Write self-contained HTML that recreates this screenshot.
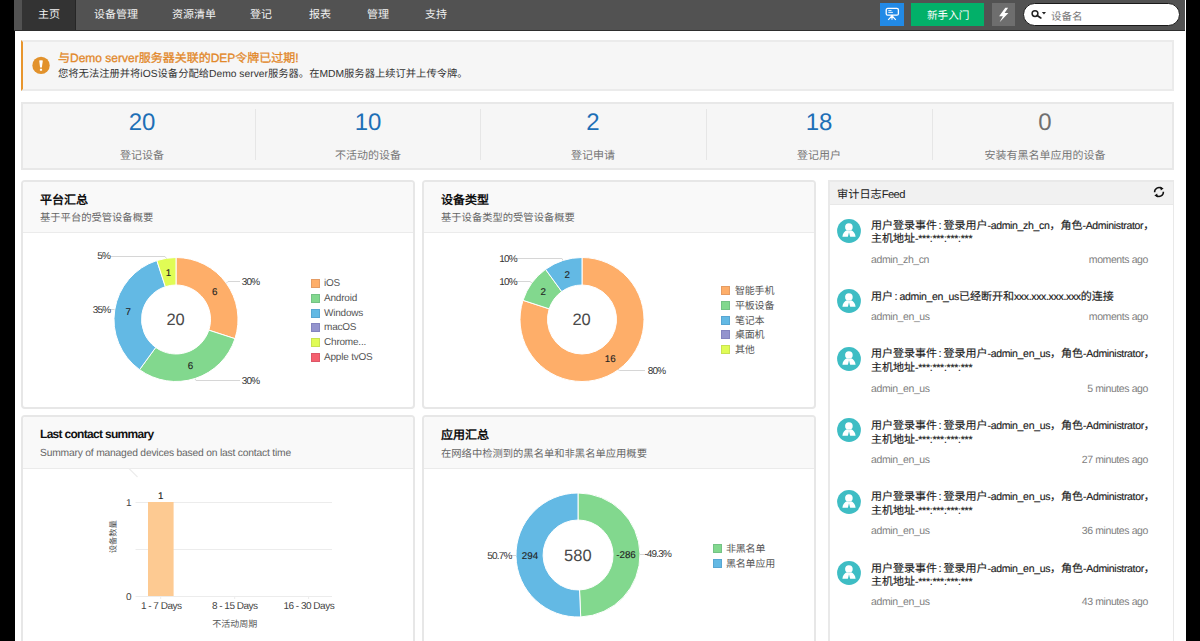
<!DOCTYPE html>
<html lang="zh-CN"><head><meta charset="utf-8">
<style>
*{box-sizing:border-box;margin:0;padding:0}
html,body{width:1200px;height:641px;overflow:hidden;background:#fff;font-family:"Liberation Sans",sans-serif;color:#333;text-rendering:geometricPrecision;line-height:1.15}
.a{position:absolute}
#lb{left:0;top:0;width:14.5px;height:641px;background:#000}
#rb{left:1185.7px;top:0;width:15px;height:641px;background:#000}
#nav{left:14px;top:0;width:1171px;height:31px;background:#525252;border-bottom:1px solid #2e2e2e}
#act{left:22px;top:0;width:54px;height:30px;background:#333;border-right:1px solid #262626}
.nt{top:9px;font-size:11px;color:#f2f2f2;white-space:nowrap}
.card{border:2px solid #e7e7e7;border-radius:4px;background:#fff;overflow:hidden}
.ch{position:absolute;left:0;top:0;right:0;height:51px;background:#f9f9f9;border-bottom:1px solid #ebebeb}
.ct{position:absolute;left:17px;top:11.6px;font-size:12px;font-weight:bold;color:#111;white-space:nowrap}
.cs{position:absolute;left:17px;top:31px;font-size:10.3px;color:#666;white-space:nowrap}
.stn{font-size:24px;color:#1d6fb6;text-align:center;width:226px}
.stl{font-size:11px;color:#777;text-align:center;width:226px}
.dv{width:1px;height:51px;top:109px;background:#e6e6e6}
.lg{font-size:10px;color:#555;white-space:nowrap;letter-spacing:-0.2px}
.sq{width:9px;height:9px;box-shadow:inset 0 0 0 1px rgba(0,0,60,0.1)}
.fi{font-size:11px;color:#222;white-space:nowrap;line-height:13.5px;-webkit-text-stroke:0.15px #222}
.l{letter-spacing:-0.33px;font-size:10.5px}
.cl{display:inline-block;width:6.5px;padding-left:1.5px;font-size:11px}
.fm{font-size:10.5px;color:#808080;white-space:nowrap;letter-spacing:-0.4px}
.av{width:24px;height:24px;border-radius:50%;background:#3ebdc4}
</style></head><body>
<div class="a" id="lb"></div>
<div class="a" id="rb"></div>
<div class="a" id="nav"></div>
<div class="a" id="act"></div>
<div class="a nt" style="left:38px">主页</div>
<div class="a nt" style="left:94px">设备管理</div>
<div class="a nt" style="left:172px">资源清单</div>
<div class="a nt" style="left:250px">登记</div>
<div class="a nt" style="left:309px">报表</div>
<div class="a nt" style="left:367px">管理</div>
<div class="a nt" style="left:425px">支持</div>

<!-- nav right -->
<div class="a" style="left:880px;top:3px;width:24px;height:22.5px;background:#228ae6"></div>
<div class="a" style="left:911px;top:3px;width:73px;height:23px;background:#02b069"></div>
<div class="a nt" style="left:927px;top:9.8px;color:#fff;font-size:10.6px">新手入门</div>
<div class="a" style="left:992px;top:3px;width:23px;height:23px;background:#6e6e6e"></div>
<div class="a" style="left:1023px;top:2.5px;width:156.5px;height:23px;background:#fff;border:1.2px solid #1a1a1a;border-radius:12px"></div>
<div class="a" style="left:1051px;top:10.5px;font-size:10.5px;color:#777">设备名</div>

<svg class="a" style="left:0;top:0" width="1200" height="31" viewBox="0 0 1200 31">
<rect x="886.2" y="8.4" width="12.2" height="6.8" rx="1.5" fill="none" stroke="#fff" stroke-width="1.3"/>
<path d="M888.3 10.6h3.2M888.3 12.4h4.6" stroke="#fff" stroke-width="0.9"/>
<circle cx="892" cy="16" r="1.2" fill="#fff"/>
<path d="M891.8 16L888.2 19.8M892 16V19.8M892.2 16L895.8 19.8" stroke="#fff" stroke-width="1.1"/>
<path d="M1005.3 7.8H1008.1L1004.6 13.1H1008.4L999.6 22.2L1002.9 16.3H999.1Z" fill="#fff"/>
<circle cx="1035" cy="13.6" r="2.9" fill="none" stroke="#222" stroke-width="1.5"/>
<path d="M1037.2 15.6L1040.8 17.9" stroke="#222" stroke-width="1.8" stroke-linecap="round"/>
<path d="M1041.9 12H1046L1043.95 14.6Z" fill="#222"/>
</svg>
<!-- alert -->
<div class="a" style="left:21px;top:40px;width:1153px;height:51px;background:#f6f6f6;border:2px solid #ebebeb;border-left:2px solid #e8962e"></div>
<svg class="a" style="left:30px;top:54px" width="22" height="22" viewBox="30 54 22 22"><circle cx="41.05" cy="65.4" r="8.7" fill="#e2922c"/><path d="M39.2 60.6Q41 59.9 42.8 60.6L41.9 67.5H40.1Z" fill="#fff"/><rect x="39.9" y="68.7" width="2.2" height="2.1" rx="0.4" fill="#fff"/></svg>
<div class="a" style="left:58px;top:51.6px;font-size:12px;color:#e2882a;-webkit-text-stroke:0.3px #e2882a;white-space:nowrap">与Demo server服务器关联的DEP令牌已过期!</div>
<div class="a" style="left:58px;top:69.3px;font-size:10.3px;color:#333;white-space:nowrap">您将无法注册并将iOS设备分配给Demo server服务器。在MDM服务器上续订并上传令牌。</div>

<!-- stats -->
<div class="a" style="left:21px;top:102px;width:1153px;height:68px;background:#f6f6f6;border:2px solid #e8e8e8"></div>
<div class="a dv" style="left:255px"></div>
<div class="a dv" style="left:480px"></div>
<div class="a dv" style="left:706px"></div>
<div class="a dv" style="left:932px"></div>
<div class="a stn" style="left:29px;top:109px">20</div>
<div class="a stn" style="left:255px;top:109px">10</div>
<div class="a stn" style="left:480px;top:109px">2</div>
<div class="a stn" style="left:706px;top:109px">18</div>
<div class="a stn" style="left:932px;top:109px;color:#707070">0</div>
<div class="a stl" style="left:29px;top:150px">登记设备</div>
<div class="a stl" style="left:255px;top:150px">不活动的设备</div>
<div class="a stl" style="left:480px;top:150px">登记申请</div>
<div class="a stl" style="left:706px;top:150px">登记用户</div>
<div class="a stl" style="left:932px;top:150px">安装有黑名单应用的设备</div>

<!-- cards -->
<div class="a card" style="left:21px;top:180px;width:394px;height:229px"><div class="ch"></div><div class="ct">平台汇总</div><div class="cs">基于平台的受管设备概要</div></div>
<div class="a card" style="left:422px;top:180px;width:394px;height:229px"><div class="ch"></div><div class="ct">设备类型</div><div class="cs">基于设备类型的受管设备概要</div></div>
<div class="a card" style="left:21px;top:415px;width:394px;height:240px"><div class="ch" style="height:52px"></div><div class="ct" style="letter-spacing:-0.7px;top:11px">Last contact summary</div><div class="cs" style="letter-spacing:-0.2px;top:31px">Summary of managed devices based on last contact time</div></div>
<div class="a card" style="left:422px;top:415px;width:394px;height:240px"><div class="ch" style="height:52px"></div><div class="ct" style="top:11.6px">应用汇总</div><div class="cs" style="top:32px">在网络中检测到的黑名单和非黑名单应用概要</div></div>

<!-- feed -->
<div class="a" style="left:828px;top:180px;width:346px;height:470px;border:2px solid #e9e9e9;border-right-width:1.5px;background:#fff"></div>
<div class="a" style="left:830px;top:182px;width:342.5px;height:23px;background:#f1f1f1;border-bottom:1px solid #e8e8e8"></div>
<div class="a" style="left:837px;top:188.8px;font-size:11.2px;color:#222">审计日志<span style="letter-spacing:-0.6px">Feed</span></div>

<svg class="a" style="left:0;top:0" width="1200" height="641" viewBox="0 0 1200 641" font-family="Liberation Sans, sans-serif">
<g stroke="#fff" stroke-width="1">
<path d="M176.00 257.50A62 62 0 0 1 234.97 338.66L208.81 330.16A34.5 34.5 0 0 0 176.00 285.00Z" fill="#feae69"/>
<path d="M234.97 338.66A62 62 0 0 1 139.56 369.66L155.72 347.41A34.5 34.5 0 0 0 208.81 330.16Z" fill="#82d88e"/>
<path d="M139.56 369.66A62 62 0 0 1 156.84 260.53L165.34 286.69A34.5 34.5 0 0 0 155.72 347.41Z" fill="#63b9e4"/>
<path d="M156.84 260.53A62 62 0 0 1 176.00 257.50L176.00 285.00A34.5 34.5 0 0 0 165.34 286.69Z" fill="#e0fc55"/>
<path d="M582.00 257.50A62 62 0 1 1 523.03 300.34L549.19 308.84A34.5 34.5 0 1 0 582.00 285.00Z" fill="#feae69"/>
<path d="M523.03 300.34A62 62 0 0 1 545.56 269.34L561.72 291.59A34.5 34.5 0 0 0 549.19 308.84Z" fill="#82d88e"/>
<path d="M545.56 269.34A62 62 0 0 1 582.00 257.50L582.00 285.00A34.5 34.5 0 0 0 561.72 291.59Z" fill="#63b9e4"/>
<path d="M578.00 493.00A62 62 0 0 1 580.70 616.94L579.53 589.97A35 35 0 0 0 578.00 520.00Z" fill="#82d88e"/>
<path d="M580.70 616.94A62 62 0 1 1 578.00 493.00L578.00 520.00A35 35 0 1 0 579.53 589.97Z" fill="#63b9e4"/>
</g>
<g fill="none" stroke="#d6d6d6" stroke-width="1">
<path d="M110 256.5H165L166.5 258.5"/>
<path d="M226 283.5L228 281.5H240"/>
<path d="M110 309.5H114.5"/>
<path d="M195 379L196 380.5H240"/>
<path d="M516 258.5H562L563 260.5"/>
<path d="M516 281.5H530L532 283"/>
<path d="M618 369.5L619.5 370.5H645"/>
<path d="M511 555.5H516"/>
<path d="M640 554.5H644"/>
</g>
<g font-size="10" fill="#333" letter-spacing="-0.8">
<text x="97.3" y="258.5">5%</text>
<text x="241.8" y="284.5">30%</text>
<text x="92.8" y="312.5">35%</text>
<text x="241.8" y="383.5">30%</text>
<text x="499.3" y="261.5">10%</text>
<text x="499.3" y="284.5">10%</text>
<text x="647.8" y="373.5">80%</text>
<text x="487.3" y="558.5">50.7%</text>
<text x="644.3" y="557.0">-49.3%</text>
</g>
<g font-size="9.8" fill="#222" text-anchor="middle" stroke="#222" stroke-width="0.12">
<text x="214.8" y="295">6</text>
<text x="190.5" y="368.6">6</text>
<text x="128.2" y="314.5">7</text>
<text x="168.5" y="275.5">1</text>
<text x="610.2" y="362">16</text>
<text x="543.2" y="295">2</text>
<text x="567.2" y="277.5">2</text>
<text x="626" y="558">-286</text>
<text x="530" y="559">294</text>
</g>
<g font-size="16.5" fill="#4a4a4a" text-anchor="middle">
<text x="175.6" y="325.2">20</text>
<text x="581.6" y="325.2">20</text>
<text x="577.8" y="561">580</text>
</g>
<path d="M129 468.5L137.5 477" stroke="#ececec" stroke-width="1.2"/>
<!-- bar chart -->
<g stroke="#ececec" stroke-width="1">
<path d="M135.5 502.5H332M135.5 549.5H332M135.5 596.5H332M160.7 596V599M234.7 596V599M308.6 596V599"/>
</g>
<rect x="148" y="502" width="25.6" height="94" fill="#fdca92"/>
<g font-size="10" fill="#444">
<text x="131.5" y="506" text-anchor="end">1</text>
<text x="131.5" y="600" text-anchor="end">0</text>
<text x="160.7" y="498.5" text-anchor="middle" fill="#222" stroke="#222" stroke-width="0.12" font-size="9.8">1</text>
<g letter-spacing="-0.5"><text x="161.2" y="609" text-anchor="middle">1 - 7 Days</text>
<text x="234.7" y="609" text-anchor="middle">8 - 15 Days</text>
<text x="308.8" y="609" text-anchor="middle">16 - 30 Days</text></g>
<text x="234.7" y="627" text-anchor="middle" fill="#555" font-size="9">不活动周期</text>
<text transform="translate(115.8 536.7) rotate(-90)" text-anchor="middle" fill="#555" font-size="8.3">设备数量</text>
</g>
</svg>

<!-- legends -->
<div class="a sq" style="left:311px;top:279px;background:#feae69"></div><div class="a lg" style="left:324px;top:278.0px">iOS</div>
<div class="a sq" style="left:311px;top:293.8px;background:#82d88e"></div><div class="a lg" style="left:324px;top:292.8px">Android</div>
<div class="a sq" style="left:311px;top:308.6px;background:#63b9e4"></div><div class="a lg" style="left:324px;top:307.6px">Windows</div>
<div class="a sq" style="left:311px;top:323.4px;background:#9494ce"></div><div class="a lg" style="left:324px;top:322.4px">macOS</div>
<div class="a sq" style="left:311px;top:338.2px;background:#e0fc55"></div><div class="a lg" style="left:324px;top:337.2px">Chrome...</div>
<div class="a sq" style="left:311px;top:353px;background:#f5606e"></div><div class="a lg" style="left:324px;top:352.0px">Apple tvOS</div>

<div class="a sq" style="left:721px;top:286px;background:#feae69"></div><div class="a lg" style="left:735px;top:286.0px">智能手机</div>
<div class="a sq" style="left:721px;top:300.8px;background:#82d88e"></div><div class="a lg" style="left:735px;top:300.8px">平板设备</div>
<div class="a sq" style="left:721px;top:315.6px;background:#63b9e4"></div><div class="a lg" style="left:735px;top:315.6px">笔记本</div>
<div class="a sq" style="left:721px;top:330.4px;background:#9494ce"></div><div class="a lg" style="left:735px;top:330.4px">桌面机</div>
<div class="a sq" style="left:721px;top:345.2px;background:#e0fc55"></div><div class="a lg" style="left:735px;top:345.2px">其他</div>

<div class="a sq" style="left:713px;top:544px;background:#82d88e"></div><div class="a lg" style="left:726px;top:543.5px">非黑名单</div>
<div class="a sq" style="left:713px;top:559px;background:#63b9e4"></div><div class="a lg" style="left:726px;top:558.5px">黑名单应用</div>
<svg class="a" style="left:1151px;top:184px" width="16" height="16" viewBox="0 0 16 16"><path d="M3.6 8.2A4.4 4.4 0 0 1 10.6 4.4" fill="none" stroke="#111" stroke-width="1.5"/><path d="M12.4 7.8A4.4 4.4 0 0 1 5.4 11.6" fill="none" stroke="#111" stroke-width="1.5"/><path d="M9.2 2.6L12.6 4.6L9.8 6.6Z" fill="#111"/><path d="M6.8 13.4L3.4 11.4L6.2 9.4Z" fill="#111"/></svg>
<!-- feed items -->
<div class="a" style="left:837px;top:218.7px;width:24px;height:24px"><svg width="24" height="24" viewBox="0 0 24 24"><circle cx="12" cy="12" r="11.9" fill="#3ebdc4"/><circle cx="11.9" cy="8" r="3.8" fill="#fff"/><path d="M5.4 17.8C5.7 14.2 7.8 11.9 10 11.3L12 12.2L14 11.3C16.2 11.9 18.3 14.2 18.6 17.8Z" fill="#fff"/><path d="M12 13.2L13.2 17.9H10.8Z" fill="#3ebdc4"/></svg></div>
<div class="a fi" style="left:871px;top:219.9px">用户登录事件<span class="cl">:</span>登录用户<span class="l">-admin_zh_cn</span>，角色<span class="l">-Administrator</span>，<br>主机地址<span class="l" style="letter-spacing:-0.25px">-***:***:***:***</span></div>
<div class="a fm" style="left:871px;top:254.3px">admin_zh_cn</div>
<div class="a fm" style="right:52px;top:254.3px">moments ago</div>
<div class="a" style="left:837px;top:289.0px;width:24px;height:24px"><svg width="24" height="24" viewBox="0 0 24 24"><circle cx="12" cy="12" r="11.9" fill="#3ebdc4"/><circle cx="11.9" cy="8" r="3.8" fill="#fff"/><path d="M5.4 17.8C5.7 14.2 7.8 11.9 10 11.3L12 12.2L14 11.3C16.2 11.9 18.3 14.2 18.6 17.8Z" fill="#fff"/><path d="M12 13.2L13.2 17.9H10.8Z" fill="#3ebdc4"/></svg></div>
<div class="a fi" style="left:871px;top:291.3px">用户<span class="cl">:</span><span class="l">admin_en_us</span>已经断开和<span class="l">xxx.xxx.xxx.xxx</span>的连接</div>
<div class="a fm" style="left:871px;top:311.3px">admin_en_us</div>
<div class="a fm" style="right:52px;top:311.3px">moments ago</div>
<div class="a" style="left:837px;top:347.0px;width:24px;height:24px"><svg width="24" height="24" viewBox="0 0 24 24"><circle cx="12" cy="12" r="11.9" fill="#3ebdc4"/><circle cx="11.9" cy="8" r="3.8" fill="#fff"/><path d="M5.4 17.8C5.7 14.2 7.8 11.9 10 11.3L12 12.2L14 11.3C16.2 11.9 18.3 14.2 18.6 17.8Z" fill="#fff"/><path d="M12 13.2L13.2 17.9H10.8Z" fill="#3ebdc4"/></svg></div>
<div class="a fi" style="left:871px;top:348.4px">用户登录事件<span class="cl">:</span>登录用户<span class="l">-admin_en_us</span>，角色<span class="l">-Administrator</span>，<br>主机地址<span class="l" style="letter-spacing:-0.25px">-***:***:***:***</span></div>
<div class="a fm" style="left:871px;top:382.8px">admin_en_us</div>
<div class="a fm" style="right:52px;top:382.8px">5 minutes ago</div>
<div class="a" style="left:837px;top:418.4px;width:24px;height:24px"><svg width="24" height="24" viewBox="0 0 24 24"><circle cx="12" cy="12" r="11.9" fill="#3ebdc4"/><circle cx="11.9" cy="8" r="3.8" fill="#fff"/><path d="M5.4 17.8C5.7 14.2 7.8 11.9 10 11.3L12 12.2L14 11.3C16.2 11.9 18.3 14.2 18.6 17.8Z" fill="#fff"/><path d="M12 13.2L13.2 17.9H10.8Z" fill="#3ebdc4"/></svg></div>
<div class="a fi" style="left:871px;top:420.3px">用户登录事件<span class="cl">:</span>登录用户<span class="l">-admin_en_us</span>，角色<span class="l">-Administrator</span>，<br>主机地址<span class="l" style="letter-spacing:-0.25px">-***:***:***:***</span></div>
<div class="a fm" style="left:871px;top:453.9px">admin_en_us</div>
<div class="a fm" style="right:52px;top:453.9px">27 minutes ago</div>
<div class="a" style="left:837px;top:490.0px;width:24px;height:24px"><svg width="24" height="24" viewBox="0 0 24 24"><circle cx="12" cy="12" r="11.9" fill="#3ebdc4"/><circle cx="11.9" cy="8" r="3.8" fill="#fff"/><path d="M5.4 17.8C5.7 14.2 7.8 11.9 10 11.3L12 12.2L14 11.3C16.2 11.9 18.3 14.2 18.6 17.8Z" fill="#fff"/><path d="M12 13.2L13.2 17.9H10.8Z" fill="#3ebdc4"/></svg></div>
<div class="a fi" style="left:871px;top:491.3px">用户登录事件<span class="cl">:</span>登录用户<span class="l">-admin_en_us</span>，角色<span class="l">-Administrator</span>，<br>主机地址<span class="l" style="letter-spacing:-0.25px">-***:***:***:***</span></div>
<div class="a fm" style="left:871px;top:525.3px">admin_en_us</div>
<div class="a fm" style="right:52px;top:525.3px">36 minutes ago</div>
<div class="a" style="left:837px;top:560.5px;width:24px;height:24px"><svg width="24" height="24" viewBox="0 0 24 24"><circle cx="12" cy="12" r="11.9" fill="#3ebdc4"/><circle cx="11.9" cy="8" r="3.8" fill="#fff"/><path d="M5.4 17.8C5.7 14.2 7.8 11.9 10 11.3L12 12.2L14 11.3C16.2 11.9 18.3 14.2 18.6 17.8Z" fill="#fff"/><path d="M12 13.2L13.2 17.9H10.8Z" fill="#3ebdc4"/></svg></div>
<div class="a fi" style="left:871px;top:562.6px">用户登录事件<span class="cl">:</span>登录用户<span class="l">-admin_en_us</span>，角色<span class="l">-Administrator</span>，<br>主机地址<span class="l" style="letter-spacing:-0.25px">-***:***:***:***</span></div>
<div class="a fm" style="left:871px;top:596.3px">admin_en_us</div>
<div class="a fm" style="right:52px;top:596.3px">43 minutes ago</div>
</body></html>
